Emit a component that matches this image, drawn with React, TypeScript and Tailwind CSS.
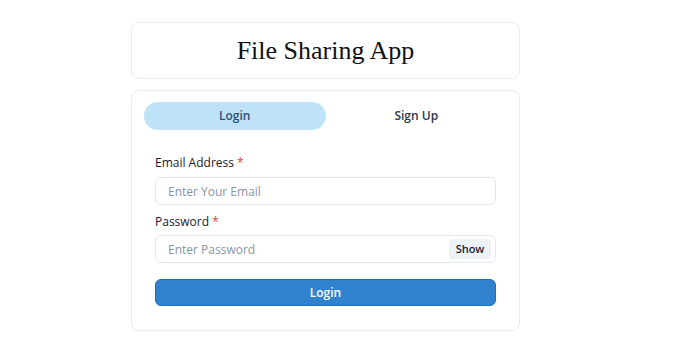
import React, { useState } from 'react';

const App: React.FC = () => {
  const [tab, setTab] = useState<'login' | 'signup'>('login');
  const [show, setShow] = useState(false);

  return (
    <div className="min-h-screen bg-white font-['Open_Sans',sans-serif]">
      <div className="ml-[131px] w-[389px] pt-[22px]">
        <div className="flex h-[57px] items-center justify-center rounded-lg border border-[#e9ecef] bg-white">
          <h1 className="font-['Liberation_Serif',serif] text-[26px] leading-none text-[#111]">File Sharing App</h1>
        </div>

        <div className="mt-[11px] rounded-lg border border-[#e9ecef] bg-white px-3 pt-[11px] pb-3">
          <div className="flex">
            <button
              onClick={() => setTab('login')}
              className={`h-7 flex-1 rounded-full text-[12px] font-semibold ${tab === 'login' ? 'bg-[#bee3f8] text-[#2f4f75]' : 'text-[#2d3748]'}`}
            >
              Login
            </button>
            <button
              onClick={() => setTab('signup')}
              className={`h-7 flex-1 rounded-full text-[12px] font-semibold ${tab === 'signup' ? 'bg-[#bee3f8] text-[#2f4f75]' : 'text-[#2d3748]'}`}
            >
              Sign Up
            </button>
          </div>

          <div className="px-[11px] pt-[25px] pb-3">
            <label className="block text-[12px] leading-4 text-[#1a202c]">
              Email Address <span className="text-[#e53e3e]">*</span>
            </label>
            <input
              placeholder="Enter Your Email"
              className="mt-[6px] h-7 w-full rounded-md border border-[#e2e8f0] px-3 text-[12px] text-[#1a202c] outline-none placeholder:text-[#8a94a6]"
            />

            <label className="mt-[9px] block text-[12px] leading-4 text-[#1a202c]">
              Password <span className="text-[#e53e3e]">*</span>
            </label>
            <div className="relative mt-[5px]">
              <input
                type={show ? 'text' : 'password'}
                placeholder="Enter Password"
                className="h-7 w-full rounded-md border border-[#e2e8f0] px-3 pr-14 text-[12px] text-[#1a202c] outline-none placeholder:text-[#8a94a6]"
              />
              <button
                onClick={() => setShow(!show)}
                className="absolute top-[4px] right-[5px] h-[20px] w-[42px] rounded bg-[#edf2f7] text-[11px] font-semibold text-[#1a202c]"
              >
                {show ? 'Hide' : 'Show'}
              </button>
            </div>

            <button className="mt-[16px] h-[27px] w-full rounded-md border border-[#1f6fbf] bg-[#3182ce] text-[12px] font-semibold text-white">
              Login
            </button>
          </div>
        </div>
      </div>
    </div>
  );
};

export default App;
